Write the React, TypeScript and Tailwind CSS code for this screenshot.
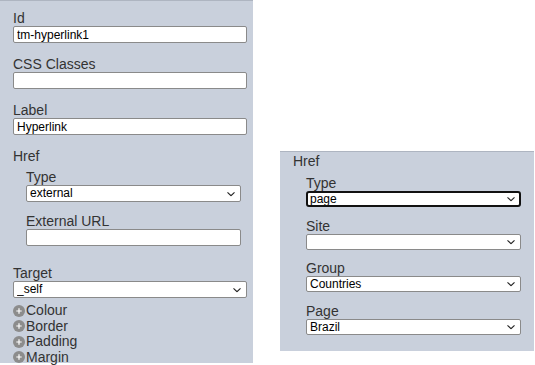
import React from "react";

function Chevron() {
  return (
    <svg
      className="pointer-events-none absolute right-[6px] top-1/2 -translate-y-1/2"
      width="8"
      height="5"
      viewBox="0 0 8 5"
      fill="none"
    >
      <path d="M0.5 0.8 L4 4.2 L7.5 0.8" stroke="#222" strokeWidth="1.1" />
    </svg>
  );
}

function TextInput({ value }: { value: string }) {
  return (
    <input
      readOnly
      value={value}
      className="block w-full h-[17px] border border-[#8a8a8a] rounded-[2px] bg-white px-[3px] text-[12px] leading-[15px] text-black outline-none"
    />
  );
}

function Select({
  value,
  h = "h-[17px]",
  focused = false,
}: {
  value: string;
  h?: string;
  focused?: boolean;
}) {
  return (
    <div className={`relative w-full ${h}`}>
      <select
        value={value}
        onChange={() => {}}
        className={
          focused
            ? "block w-full h-full appearance-none border-2 border-[#111111] rounded-[3px] bg-white pl-[2px] text-[12px] leading-[13px] text-black outline-none"
            : "block w-full h-full appearance-none border border-[#8a8a8a] rounded-[2px] bg-white pl-[3px] text-[12px] leading-[15px] text-black outline-none"
        }
      >
        <option value={value}>{value}</option>
      </select>
      <Chevron />
    </div>
  );
}

function Label({ children }: { children: React.ReactNode }) {
  return <div className="text-[14px] leading-[16px] text-[#333333]">{children}</div>;
}

function Expander({ label }: { label: string }) {
  return (
    <div className="flex items-center text-[14px] leading-[15.5px] text-[#333333]">
      <span className="mr-[1px] flex h-[12px] w-[12px] items-center justify-center rounded-full bg-[#8c8c8c]">
        <svg width="6" height="6" viewBox="0 0 6 6">
          <path d="M3 0.3 V5.7 M0.3 3 H5.7" stroke="#ffffff" strokeWidth="1.2" />
        </svg>
      </span>
      <span>{label}</span>
    </div>
  );
}

export default function App() {
  return (
    <div className="flex h-[365px] w-[535px] items-start bg-white font-['Liberation_Sans',Arial,sans-serif]">
      {/* Left panel */}
      <div className="h-[363px] w-[253px] shrink-0 border-t border-[#aeb5c1] bg-[#c9d0dc] pl-[13px] pr-[6px] pt-[9px]">
        <Label>Id</Label>
        <TextInput value="tm-hyperlink1" />
        <div className="h-[13px]" />
        <Label>CSS Classes</Label>
        <TextInput value="" />
        <div className="h-[13px]" />
        <Label>Label</Label>
        <TextInput value="Hyperlink" />
        <div className="h-[13px]" />
        <Label>Href</Label>
        <div className="mt-[5px] pl-[13px] pr-[6px]">
          <Label>Type</Label>
          <Select value="external" />
          <div className="h-[11px]" />
          <Label>External URL</Label>
          <TextInput value="" />
        </div>
        <div className="h-[19px]" />
        <Label>Target</Label>
        <Select value="_self" />
        <div className="mt-[5px] flex flex-col">
          <Expander label="Colour" />
          <Expander label="Border" />
          <Expander label="Padding" />
          <Expander label="Margin" />
        </div>
      </div>

      {/* Right panel */}
      <div className="ml-[27px] mt-[151px] h-[200px] w-[254px] shrink-0 border-t border-[#aeb5c1] bg-[#c9d0dc] px-[13px] pt-[1px]">
        <Label>Href</Label>
        <div className="mt-[6px] pl-[13px]">
          <Label>Type</Label>
          <Select value="page" h="h-[16px]" focused />
          <div className="h-[10.5px]" />
          <Label>Site</Label>
          <Select value="" h="h-[16px]" />
          <div className="h-[10.5px]" />
          <Label>Group</Label>
          <Select value="Countries" h="h-[16px]" />
          <div className="h-[10.5px]" />
          <Label>Page</Label>
          <Select value="Brazil" h="h-[16px]" />
        </div>
      </div>
    </div>
  );
}
